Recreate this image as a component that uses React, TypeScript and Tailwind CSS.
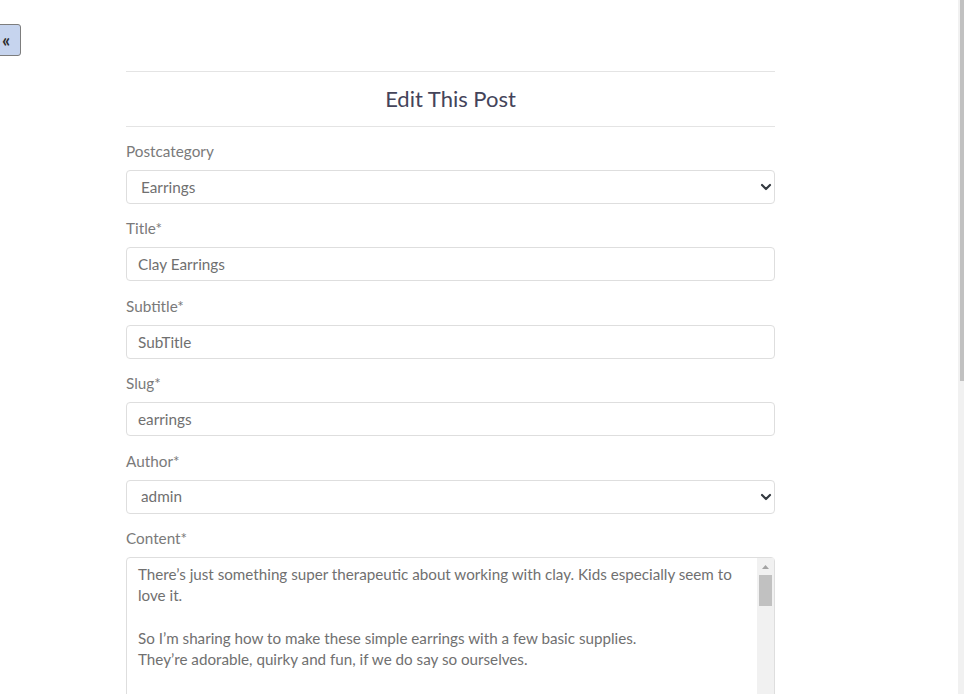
import { ChevronDown } from "lucide-react";

const content = `There’s just something super therapeutic about working with clay. Kids especially seem to
love it.

So I’m sharing how to make these simple earrings with a few basic supplies.
They’re adorable, quirky and fun, if we do say so ourselves.

What you need:
- Polymer clay in a few colours
- A rolling pin and small cutters
- Earring hooks and jump rings
- Pliers

Roll out the clay, cut your shapes, poke a hole near the top and bake.
Once they have cooled, attach the jump rings and hooks and you are done!
`;

const Label = ({ children }: { children: React.ReactNode }) => (
  <label className="mb-[8px] block text-[15.3px] leading-[21px] text-[#7a7a7a]">{children}</label>
);

const TextField = ({ label, value }: { label: string; value: string }) => (
  <div className="mb-[14.4px]">
    <Label>{label}</Label>
    <input
      readOnly
      value={value}
      className="block h-[34px] w-full rounded-[4px] border border-[#dedede] bg-white px-[11px] text-[15.3px] text-[#707070] outline-none"
    />
  </div>
);

const SelectField = ({ label, value }: { label: string; value: string }) => (
  <div className="mb-[14.4px]">
    <Label>{label}</Label>
    <div className="relative">
      <select
        defaultValue={value}
        className="block h-[34px] w-full appearance-none rounded-[4px] border border-[#dedede] bg-white pl-[14px] text-[15.3px] text-[#707070] outline-none"
      >
        <option>{value}</option>
      </select>
      <ChevronDown
        className="pointer-events-none absolute right-[1px] top-[9px] h-[16px] w-[16px] text-[#343a40]"
        strokeWidth={3.2}
      />
    </div>
  </div>
);

export default function App() {
  return (
    <div className="flex h-[694px] w-[964px] overflow-hidden bg-white font-['Lato',sans-serif]">
      <div className="flex-1 pt-[24px]">
        <button className="-ml-[16px] flex h-[32px] w-[37px] items-center justify-start rounded-[3px] border border-[#7d7d7d] bg-[#c6d4ee] pl-[17px] text-[18px] font-bold leading-none text-[#2b2b2b]">
          «
        </button>

        <div className="ml-[126px] mt-[15px] w-[649px]">
          <hr className="border-t border-[#e4e4e4]" />
          <h2 className="text-center text-[22px] leading-[54px] text-[#44445a]">Edit This Post</h2>
          <hr className="mb-[14px] border-t border-[#e4e4e4]" />

          <SelectField label="Postcategory" value="Earrings" />
          <TextField label="Title*" value="Clay Earrings" />
          <TextField label="Subtitle*" value="SubTitle" />
          <TextField label="Slug*" value="earrings" />
          <SelectField label="Author*" value="admin" />

          <div>
            <Label>Content*</Label>
            <div className="relative">
              <textarea
                readOnly
                value={content}
                className="block h-[300px] w-full resize-none overflow-hidden rounded-[4px] border border-[#dedede] bg-white py-[6px] pl-[11px] pr-[28px] text-[15.2px] leading-[21.3px] text-[#707070] outline-none"
              />
              {/* scrollbar of the textarea */}
              <div className="absolute right-[1px] top-[1px] bottom-[1px] flex w-[17px] flex-col items-center bg-[#f1f1f1]">
                <svg width="17" height="17" viewBox="0 0 17 17" className="shrink-0">
                  <path d="M5 11 L8.5 7 L12 11 Z" fill="#a3a3a3" />
                </svg>
                <div className="h-[31px] w-[13px] bg-[#c1c1c1]" />
              </div>
            </div>
          </div>
        </div>
      </div>

      <div className="w-[6px] bg-[#f1f1f1]">
        <div className="ml-[2px] h-[381px] w-[4px] bg-[#c1c1c1]" />
      </div>
    </div>
  );
}
